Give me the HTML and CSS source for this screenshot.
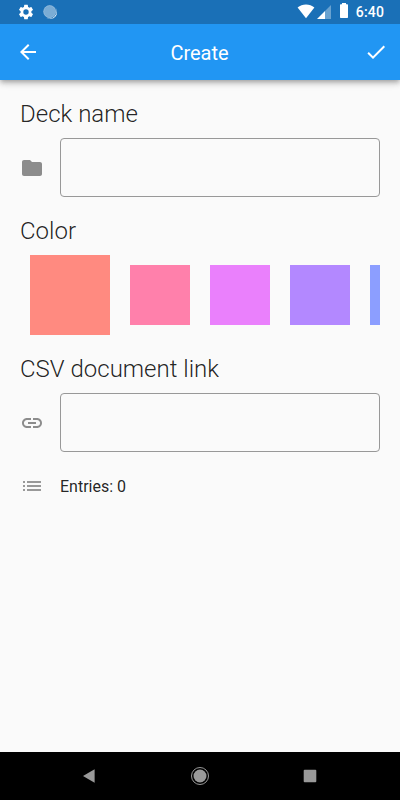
FILE: index.html
```html
<!DOCTYPE html>
<html lang="en">
<head>
<meta charset="utf-8">
<title>Create</title>
<link rel="stylesheet" href="styles.css">
</head>
<body>
<div class="screen">
  <header class="top">
    <div class="status">
      <svg class="gear" viewBox="0 0 24 24"><path d="M19.14 12.94c.04-.3.06-.61.06-.94s-.02-.64-.07-.94l2.03-1.58a.49.49 0 0 0 .12-.61l-1.92-3.32a.49.49 0 0 0-.59-.22l-2.39.96a7 7 0 0 0-1.62-.94l-.36-2.54a.48.48 0 0 0-.48-.41h-3.84a.47.47 0 0 0-.47.41l-.36 2.54c-.59.24-1.13.57-1.62.94l-2.39-.96a.48.48 0 0 0-.59.22L2.74 8.87a.47.47 0 0 0 .12.61l2.03 1.58c-.05.3-.09.63-.09.94s.02.64.07.94l-2.03 1.58a.49.49 0 0 0-.12.61l1.92 3.32c.12.22.37.29.59.22l2.39-.96c.5.38 1.03.7 1.62.94l.36 2.54c.05.24.24.41.48.41h3.84c.24 0 .44-.17.47-.41l.36-2.54c.59-.24 1.13-.56 1.62-.94l2.39.96c.22.08.47 0 .59-.22l1.92-3.32a.47.47 0 0 0-.12-.61zM12 15.6A3.6 3.6 0 1 1 12 8.4a3.6 3.6 0 0 1 0 7.2z"/></svg>
      <svg class="sync" viewBox="0 0 16 16"><circle cx="7.700" cy="7.600" r="6.300" opacity=".42"/><circle class="rim" cx="7.700" cy="7.600" r="6.100"/><path d="M13.400 3.600A7 7 0 0 1 4.300 14 7.200 7.200 0 0 0 13.400 3.600z"/></svg>
      <span class="spacer"></span>
      <svg class="wifi" viewBox="0 0 18 16"><path d="M9 15.2.6 4.6C3 2.6 5.800 1.500 9 1.500s6 1.100 8.400 3.100z"/></svg>
      <svg class="signal" viewBox="0 0 14 14"><path d="M14 0v14H8V6z" opacity=".35"/><path d="M8 6v8H0z"/></svg>
      <svg class="battery" viewBox="0 0 8 15"><path d="M2 0h4v1.300h1.300q.7 0 .7.700v12.300q0 .7-.7.700H.7q-.7 0-.7-.7V2q0-.7.700-.7H2z"/></svg>
      <span class="clock">6:40</span>
    </div>
    <div class="appbar">
      <svg class="icon" viewBox="0 0 24 24"><path d="M20 11H7.830l5.590-5.590L12 4l-8 8 8 8 1.410-1.410L7.830 13H20v-2z"/></svg>
      <h1 class="title">Create</h1>
      <svg class="icon" viewBox="0 0 24 24"><path d="M9 16.170 4.830 12l-1.420 1.410L9 19 21 7l-1.410-1.410z"/></svg>
    </div>
  </header>
  <main class="content">
    <section>
      <h2 class="heading">Deck name</h2>
      <div class="field">
        <svg class="icon" viewBox="0 0 24 24"><path d="M10 4H4c-1.100 0-1.990.9-1.990 2L2 18c0 1.100.9 2 2 2h16c1.100 0 2-.9 2-2V8c0-1.100-.9-2-2-2h-8l-2-2z"/></svg>
        <input class="input" type="text" aria-label="Deck name">
      </div>
    </section>
    <section>
      <h2 class="heading">Color</h2>
      <div class="swatches">
        <span class="swatch selected red"></span>
        <span class="swatch pink"></span>
        <span class="swatch purple"></span>
        <span class="swatch violet"></span>
        <span class="swatch indigo"></span>
      </div>
    </section>
    <section>
      <h2 class="heading">CSV document link</h2>
      <div class="field">
        <svg class="icon" viewBox="0 0 24 24"><path d="M3.900 12c0-1.710 1.390-3.100 3.100-3.100h4V7H7c-2.760 0-5 2.240-5 5s2.240 5 5 5h4v-1.900H7c-1.710 0-3.100-1.390-3.100-3.100zM8 13h8v-2H8v2zm9-6h-4v1.900h4c1.710 0 3.100 1.390 3.100 3.100s-1.390 3.100-3.100 3.100h-4V17h4c2.760 0 5-2.240 5-5s-2.240-5-5-5z"/></svg>
        <input class="input" type="text" aria-label="CSV document link">
      </div>
    </section>
    <div class="entries">
      <svg class="icon" viewBox="0 0 24 24"><path d="M3 13h2v-2H3v2zm0 4h2v-2H3v2zm0-8h2V7H3v2zm4 4h14v-2H7v2zm0 4h14v-2H7v2zM7 7v2h14V7H7z"/></svg>
      <span class="count">Entries: 0</span>
    </div>
  </main>
  <nav class="navbar">
    <svg class="nav" viewBox="0 0 20 20"><path d="M3 10 14.600 3.300v13.400z"/></svg>
    <svg class="nav" viewBox="0 0 20 20"><circle cx="10" cy="10" r="6.500"/><circle class="ring" cx="10" cy="10" r="8.500"/></svg>
    <svg class="nav" viewBox="0 0 20 20"><rect x="3.700" y="3.700" width="12.600" height="12.600" rx="1"/></svg>
  </nav>
</div>
</body>
</html>
```
FILE: styles.css
```css
* { box-sizing: border-box; }
body {
  margin: 0;
  font-family: Roboto, sans-serif;
  background: #fafafa;
  color: rgba(0, 0, 0, .87);
}
svg { display: block; flex: none; fill: currentColor; }
.screen { width: 400px; height: 800px; display: flex; flex-direction: column; overflow: hidden; }

.top {
  background: #2196f3;
  color: #fff;
  box-shadow: 0 2px 4px -1px rgba(0, 0, 0, .2), 0 4px 5px rgba(0, 0, 0, .14), 0 1px 10px rgba(0, 0, 0, .12);
}
.status { height: 24px; display: flex; align-items: center; padding: 0 16px 0 17px; background: #1a70b7; }
.gear { width: 18px; height: 18px; }
.sync { width: 16px; height: 16px; margin-left: 7px; }
.rim { fill: none; stroke: #fff; stroke-width: 1; opacity: .2; }
.spacer { flex: 1; }
.wifi { width: 18px; height: 16px; margin-top: -2px; }
.signal { width: 14px; height: 14px; margin: 0 9px 0 2px; }
.battery { width: 8px; height: 15px; margin: -3px 8px 0 0; }
.clock { font-size: 14px; font-weight: 500; line-height: 24px; letter-spacing: .15px; }

.appbar { height: 56px; display: flex; align-items: center; justify-content: space-between; padding: 0 12px 0 16px; }
.title { margin: 0; font-size: 20px; font-weight: 400; line-height: 24px; padding: 2px 5px 0 0; }
.icon { width: 24px; height: 24px; }

.content { flex: 1; display: flex; flex-direction: column; gap: 20px; padding: 20px; }
.heading { margin: 0 0 10px; font-size: 24px; font-weight: 300; line-height: 28px; }
.field { display: flex; align-items: center; gap: 16px; }
.field .icon { color: #8c8c8c; }
.input {
  flex: 1;
  min-width: 0;
  height: 59px;
  padding: 0 12px;
  border: 1px solid #989898;
  border-radius: 4px;
  background: transparent;
  font: 16px Roboto, sans-serif;
}
.swatches { display: flex; align-items: center; height: 80px; padding-left: 10px; gap: 20px; overflow: hidden; }
.swatch { flex: none; width: 60px; height: 60px; }
.selected { width: 80px; height: 80px; }
.red { background: #ff8a80; }
.pink { background: #ff80ab; }
.purple { background: #ea80fc; }
.violet { background: #b388ff; }
.indigo { background: #8c9eff; }
.entries { display: flex; align-items: center; gap: 16px; font-size: 16px; line-height: 24px; margin-top: 1px; }
.entries .icon { color: #999; }
.count { padding-top: 2px; }

.navbar { height: 48px; flex: none; display: flex; align-items: center; justify-content: space-between; padding: 0 80px; background: #000; color: #999; }
.nav { width: 20px; height: 20px; }
.ring { fill: none; stroke: #999; stroke-width: 1; }
```
